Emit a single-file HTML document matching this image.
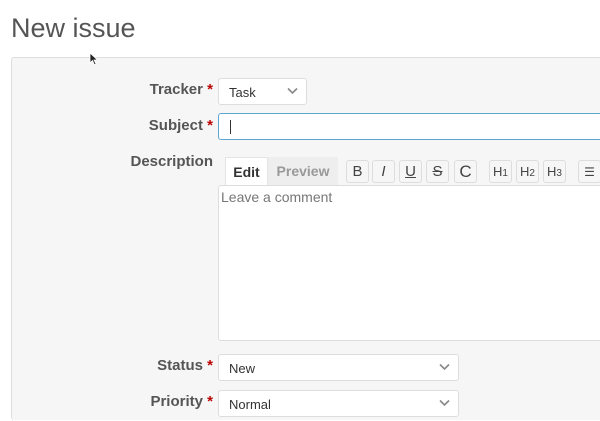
<!DOCTYPE html>
<html style="overflow:hidden;height:421px"><head><style>
body{margin:0;width:600px;height:421px;overflow:hidden;background:#fff;font-family:"Liberation Sans",sans-serif;position:relative}
.a{position:absolute}
h1{position:absolute;left:11px;top:13px;margin:0;font-weight:normal;font-size:27px;color:#555;font-family:"Liberation Sans",sans-serif}
.box{left:11px;top:57px;width:600px;height:362px;background:#f6f6f6;border:1px solid #ddd;border-bottom:none;border-radius:3px}
.lbl{font-weight:bold;font-size:15px;color:#555;text-align:right;width:200px;left:13px}
.lbl b{color:#b00}
.sel{background:#fff;border:1px solid #ddd;border-radius:3px;font-size:13px;color:#333;box-sizing:border-box;padding:6px 10px}
.chev{position:absolute;right:8px;top:8px}
.tb{width:23px;height:23px;border:1px solid #ddd;border-radius:3px;background:#f6f6f6;box-sizing:border-box;font-size:15px;color:#444;text-align:center;line-height:22px;top:160px}
</style></head><body>
<h1>New issue</h1>
<div class="a box"></div>
<svg class="a" style="left:89px;top:52px" width="10" height="14"><path d="M1 1 L1 11 L3.5 8.5 L5.5 13 L7 12 L5 8 L8.5 8 Z" fill="#222" stroke="#fff" stroke-width=".8"/></svg>

<div class="a lbl" style="top:81px">Tracker <b>*</b></div>
<div class="a sel" style="left:218px;top:78px;width:89px;height:27px">Task<svg class="chev" width="11" height="8"><path d="M1 1.5l4.5 4.5 4.5-4.5" stroke="#888" stroke-width="1.6" fill="none"/></svg></div>

<div class="a lbl" style="top:117px">Subject <b>*</b></div>
<div class="a" style="left:218px;top:113px;width:400px;height:27px;background:#fff;border:1px solid #5ea6d0;border-radius:3px;box-sizing:border-box"><div class="a" style="left:11px;top:6px;width:1px;height:14px;background:#333"></div></div>

<div class="a lbl" style="top:153px;width:200px">Description</div>
<div class="a" style="left:225px;top:157px;width:43px;height:29px;background:#fff;border:1px solid #e4e4e4;border-bottom:none;box-sizing:border-box;font-weight:bold;font-size:14px;color:#333;text-align:center;line-height:29px">Edit</div>
<div class="a" style="left:268px;top:157px;width:70px;height:28px;background:#eee;font-weight:bold;font-size:14px;color:#999;text-align:center;line-height:29px">Preview</div>
<div class="a tb" style="left:346px">B</div>
<div class="a tb" style="left:372px;font-style:italic">I</div>
<div class="a tb" style="left:399px;text-decoration:underline">U</div>
<div class="a tb" style="left:426px;text-decoration:line-through">S</div>
<div class="a tb" style="left:454px;font-size:17px">C</div>
<div class="a tb" style="left:489px;font-size:13px">H<small style="font-size:10px">1</small></div>
<div class="a tb" style="left:516px;font-size:13px">H<small style="font-size:10px">2</small></div>
<div class="a tb" style="left:543px;font-size:13px">H<small style="font-size:10px">3</small></div>
<div class="a tb" style="left:578px;font-size:12px">☰</div>
<div class="a" style="left:218px;top:185px;width:400px;height:156px;background:#fff;border:1px solid #ddd;border-radius:3px;box-sizing:border-box;padding:3px 2px;font-size:14px;color:#777">Leave a comment</div>

<div class="a lbl" style="top:357px">Status <b>*</b></div>
<div class="a sel" style="left:218px;top:354px;width:241px;height:27px">New<svg class="chev" width="11" height="8"><path d="M1 1.5l4.5 4.5 4.5-4.5" stroke="#888" stroke-width="1.6" fill="none"/></svg></div>
<div class="a lbl" style="top:393px">Priority <b>*</b></div>
<div class="a sel" style="left:218px;top:390px;width:241px;height:27px">Normal<svg class="chev" width="11" height="8"><path d="M1 1.5l4.5 4.5 4.5-4.5" stroke="#888" stroke-width="1.6" fill="none"/></svg></div>
</body></html>
